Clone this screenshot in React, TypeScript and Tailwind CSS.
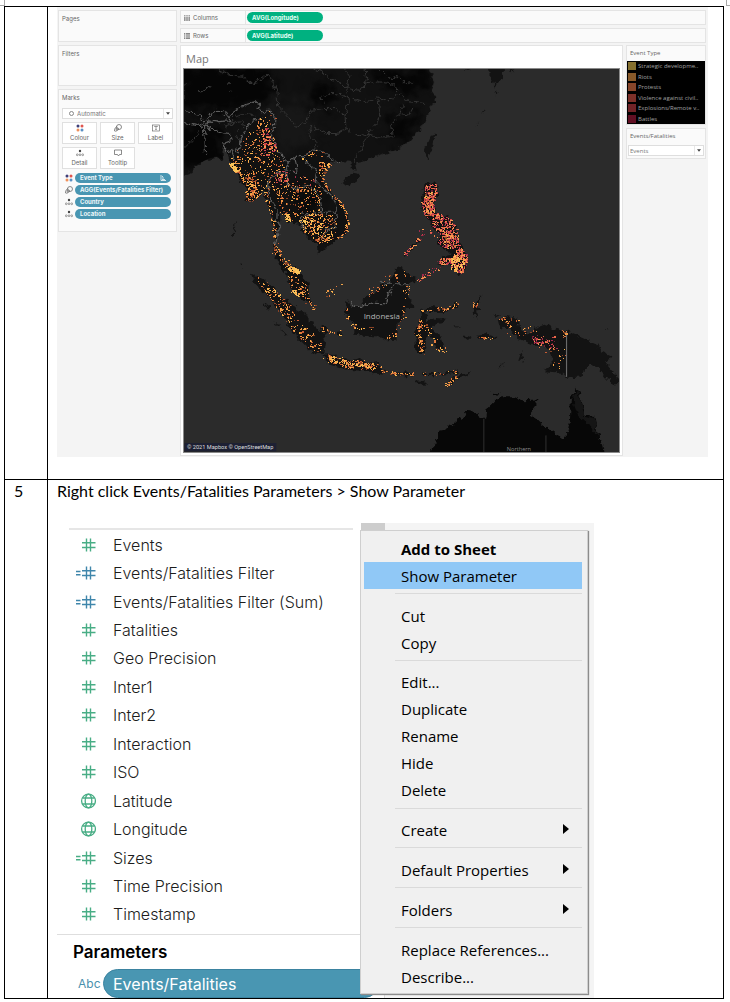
import type { ReactNode } from "react";

type Point = [number, number];

const parse = (s: string): Point[] =>
  s.split(" ").map((p) => p.split(",").map(Number) as Point);

const WARM = ["#f6b450", "#ee9644", "#e07a3c", "#c65c34", "#f2a64a", "#8a4426"];
const GOLD = ["#fbc75c", "#f8b954", "#f3a04a"];
const RED = ["#d0434a", "#e86a48", "#f59a52", "#a32b4c", "#ea7a4a", "#d04a4e", "#6e2436"];

type Cluster = { kind: "area" | "trail"; path: string; n: number; colors: string[]; spread?: number };

const CLUSTERS: Cluster[] = [
  { kind: "area", n: 300, colors: WARM, path: "165,455 200,400 240,350 265,330 285,350 275,390 285,430 300,470 322,490 300,540 265,545 265,600 272,630 250,575 230,600 195,603 200,560 175,530" },
  { kind: "area", n: 120, colors: WARM, path: "195,520 222,515 226,560 238,590 215,604 195,602" },
  { kind: "area", n: 75, colors: RED, path: "240,430 262,405 290,430 285,450 262,470 240,462" },
  { kind: "area", n: 30, colors: RED, path: "240,390 262,380 268,420 245,420" },
  { kind: "trail", n: 90, colors: GOLD, spread: 7, path: "152,490 166,512" },
  { kind: "trail", n: 40, colors: WARM, spread: 8, path: "158,478 190,545" },
  { kind: "area", n: 40, colors: RED, path: "285,510 320,508 322,545 275,560" },
  { kind: "area", n: 150, colors: WARM, path: "265,545 310,530 360,560 410,570 425,640 365,640 330,665 300,640 290,600" },
  { kind: "trail", n: 30, colors: GOLD, spread: 9, path: "318,645 325,662" },
  { kind: "trail", n: 60, colors: WARM, spread: 8, path: "250,570 268,620 280,680 285,730 282,765" },
  { kind: "trail", n: 45, colors: WARM, spread: 10, path: "282,740 310,780 325,800" },
  { kind: "trail", n: 150, colors: GOLD, spread: 9, path: "328,804 342,810 355,816" },
  { kind: "area", n: 60, colors: WARM, path: "320,820 350,830 385,860 385,900 350,885 330,860" },
  { kind: "trail", n: 24, colors: GOLD, spread: 6, path: "335,870 352,888" },
  { kind: "trail", n: 20, colors: WARM, spread: 12, path: "385,900 400,925" },
  { kind: "area", n: 200, colors: WARM, path: "362,645 400,638 465,645 470,685 450,725 420,730 395,715 370,695" },
  { kind: "trail", n: 60, colors: GOLD, spread: 14, path: "365,670 385,650 410,705 415,660" },
  { kind: "area", n: 60, colors: WARM, path: "415,480 460,490 435,520 425,550 415,520" },
  { kind: "trail", n: 85, colors: WARM, spread: 8, path: "430,550 460,585 490,620 503,660 498,692 470,715" },
  { kind: "trail", n: 40, colors: WARM, spread: 22, path: "340,570 400,560 415,600" },
  { kind: "trail", n: 14, colors: RED, spread: 20, path: "350,510 390,560" },
  { kind: "trail", n: 18, colors: WARM, spread: 18, path: "365,470 420,455" },
  { kind: "area", n: 170, colors: WARM, path: "212,822 250,838 275,860 300,890 330,910 350,960 390,990 428,1030 430,1055 405,1060 350,1010 325,980 285,920" },
  { kind: "trail", n: 24, colors: GOLD, spread: 7, path: "260,865 285,870 300,895" },
  { kind: "trail", n: 24, colors: WARM, spread: 12, path: "420,980 445,1000 480,1002" },
  { kind: "trail", n: 190, colors: WARM, spread: 14, path: "440,1074 470,1082 510,1095 540,1092 560,1100 595,1098" },
  { kind: "trail", n: 50, colors: GOLD, spread: 12, path: "445,1075 460,1078 530,1095 580,1100" },
  { kind: "trail", n: 45, colors: WARM, spread: 7, path: "600,1110 650,1122 700,1122" },
  { kind: "trail", n: 20, colors: WARM, spread: 7, path: "725,1122 780,1122 835,1113" },
  { kind: "trail", n: 24, colors: WARM, spread: 8, path: "798,1155 815,1145 835,1130" },
  { kind: "trail", n: 26, colors: WARM, spread: 8, path: "500,905 500,950 525,985 580,985" },
  { kind: "trail", n: 30, colors: WARM, spread: 16, path: "550,895 605,855 650,820 690,830" },
  { kind: "trail", n: 36, colors: WARM, spread: 10, path: "690,850 675,880 670,940 650,1000 625,1015" },
  { kind: "trail", n: 80, colors: WARM, spread: 11, path: "722,960 712,1000 725,1030 722,1060" },
  { kind: "trail", n: 34, colors: WARM, spread: 7, path: "725,930 780,928 815,925 832,908" },
  { kind: "trail", n: 34, colors: WARM, spread: 14, path: "725,965 745,985 775,1050 800,1050" },
  { kind: "area", n: 210, colors: RED, path: "732,560 748,550 768,552 772,580 760,610 765,635 745,655 730,640 724,605 738,590" },
  { kind: "area", n: 110, colors: WARM, path: "735,580 770,570 758,620 762,650 745,650 730,610" },
  { kind: "area", n: 340, colors: RED, path: "745,640 780,640 815,655 835,690 840,740 800,750 775,730 780,700 755,675" },
  { kind: "area", n: 90, colors: WARM, path: "790,690 835,710 830,745 795,745" },
  { kind: "area", n: 320, colors: RED, path: "770,785 790,770 815,775 838,735 858,755 864,785 845,820 825,815 810,790 785,795" },
  { kind: "area", n: 90, colors: GOLD, path: "808,780 830,760 855,780 850,800 830,818 812,805" },
  { kind: "trail", n: 34, colors: RED, spread: 6, path: "672,765 692,745 718,715" },
  { kind: "trail", n: 40, colors: RED, spread: 8, path: "715,842 745,818 775,805" },
  { kind: "trail", n: 14, colors: RED, spread: 18, path: "715,690 760,700" },
  { kind: "trail", n: 26, colors: WARM, spread: 14, path: "960,962 985,960 985,980 1015,960" },
  { kind: "trail", n: 18, colors: WARM, spread: 14, path: "980,1005 1030,1000 1065,980" },
  { kind: "trail", n: 65, colors: RED, spread: 20, path: "1060,1020 1085,1025 1125,1030" },
  { kind: "trail", n: 20, colors: WARM, spread: 20, path: "1100,1050 1150,1045 1145,1080 1120,1110" },
  { kind: "trail", n: 18, colors: WARM, spread: 6, path: "1150,995 1160,1000 1155,1010" },
  { kind: "trail", n: 12, colors: WARM, spread: 10, path: "880,925 895,905" },
  { kind: "trail", n: 10, colors: WARM, spread: 8, path: "897,1015 945,1010" },
  { kind: "trail", n: 12, colors: WARM, spread: 16, path: "430,880 485,865" },
];

const inside = ([x, y]: Point, poly: Point[]) => {
  let hit = false;
  for (let i = 0, j = poly.length - 1; i < poly.length; j = i++) {
    const [xi, yi] = poly[i];
    const [xj, yj] = poly[j];
    if (yi > y !== yj > y && x < ((xj - xi) * (y - yi)) / (yj - yi) + xi) hit = !hit;
  }
  return hit;
};

const makeDots = () => {
  let seed = 20211;
  const rnd = () => {
    seed = (seed * 1664525 + 1013904223) % 4294967296;
    return seed / 4294967296;
  };
  const byColor: Record<string, string> = {};
  for (const c of CLUSTERS) {
    const pts = parse(c.path);
    const xs = pts.map((p) => p[0]);
    const ys = pts.map((p) => p[1]);
    const x0 = Math.min(...xs);
    const y0 = Math.min(...ys);
    const w = Math.max(...xs) - x0;
    const h = Math.max(...ys) - y0;
    let made = 0;
    let tries = 0;
    while (made < c.n && tries++ < 8000) {
      let p: Point;
      if (c.kind === "area") {
        p = [x0 + rnd() * w, y0 + rnd() * h];
        if (!inside(p, pts)) continue;
      } else {
        const i = Math.floor(rnd() * (pts.length - 1));
        const t = rnd();
        const s = c.spread ?? 6;
        p = [
          pts[i][0] + (pts[i + 1][0] - pts[i][0]) * t + (rnd() + rnd() - 1) * s,
          pts[i][1] + (pts[i + 1][1] - pts[i][1]) * t + (rnd() + rnd() - 1) * s,
        ];
      }
      made++;
      const color = c.colors[Math.floor(rnd() * c.colors.length)];
      const width = rnd() > 0.75 ? 6 : 3;
      byColor[color] = (byColor[color] ?? "") + `M${p[0].toFixed(1)} ${p[1].toFixed(1)}h${width}v3.500h-${width}z`;
    }
  }
  return Object.entries(byColor);
};

const DOTS = makeDots();

const MAINLAND =
  "M0 200L745 200 765 245 755 270 770 290 750 330 730 375 690 420 650 450 600 465 550 485 525 490 530 512 515 505 515 485 480 483 455 487 440 500 425 525 430 550 450 575 480 610 500 640 505 670 500 695 480 715 455 735 430 745 413 765 410 735 385 715 370 700 365 675 340 672 320 660 310 640 300 635 300 660 290 700 285 735 300 770 320 800 345 800 355 820 385 850 385 880 390 912 375 905 345 880 325 845 315 815 290 785 278 760 285 720 280 690 275 650 262 610 250 570 235 590 215 607 195 600 200 570 185 545 170 520 150 490 140 455 125 440 128 480 110 470 85 475 55 490 40 500 35 515 0 528Z";

const ISLANDS = [
  "M212 822L250 838 275 860 300 890 330 910 350 930 385 945 385 965 400 970 410 985 430 1000 435 1030 430 1060 405 1062 380 1045 350 1015 325 980 310 950 285 920 270 890 240 870 220 845Z",
  "M430 1065L455 1065 480 1080 510 1085 540 1078 555 1090 595 1085 600 1105 625 1115 610 1122 560 1115 500 1110 450 1095 435 1080Z",
  "M500 900L510 920 530 925 545 915 555 890 590 880 605 850 630 845 655 800 670 805 675 820 710 835 700 850 680 855 685 890 704 925 675 925 670 955 650 975 650 1020 620 1022 600 1010 570 1010 520 1005 520 970 500 950 497 920Z",
  "M720 965L725 930 750 922 800 930 835 905 835 922 800 936 740 937 738 968 770 955 800 957 792 970 762 975 755 985 770 1000 788 1020 795 1050 770 1052 760 1020 742 995 735 1060 710 1060 705 1000Z",
  "M882 925L900 890 905 893 893 920 908 930 890 932 893 958 884 948Z",
  "M895 1008L920 1003 950 1013 948 1020 915 1012 895 1018ZM852 1010L865 1007 876 1014 868 1021 853 1018Z",
  "M955 960L980 952 1015 958 1020 990 1040 1000 1055 1002 1070 985 1095 975 1135 990 1160 995 1210 1015 1255 1035 1265 1055 1300 1070 1290 1085 1275 1085 1300 1115 1330 1150 1310 1155 1290 1145 1260 1110 1235 1095 1215 1105 1210 1130 1165 1135 1150 1120 1095 1115 1115 1098 1120 1075 1110 1050 1090 1040 1050 1030 1015 1015 990 990 960 980Z",
  "M640 1120L700 1118 700 1127 645 1127ZM722 1119L765 1121 763 1127 724 1126ZM770 1122L835 1113 835 1119 775 1127ZM705 1143L725 1144 745 1155 735 1159 712 1150ZM800 1158L815 1140 845 1125 875 1120 865 1128 830 1138 808 1158Z",
  "M490 545L505 527 520 518 538 522 530 545 505 558ZM735 445L750 410 767 403 762 430 743 475 732 455Z",
  "M924 200L974 200 970 235 945 262 938 235ZM982 200L1005 200 993 222ZM856 200L870 206 858 212ZM943 280L955 275 948 285ZM885 380L900 362 892 368ZM905 345L920 330 916 328Z",
  "M735 553L770 550 772 585 762 615 770 640 812 655 828 685 842 735 862 770 860 800 842 825 822 812 808 790 770 795 790 770 815 765 800 745 770 735 780 705 755 675 732 645 724 605Z",
  "M670 765L692 743 720 713 722 718 695 748 674 768Z",
  "M252 910L268 922 266 930 255 920ZM282 962L298 978 294 982ZM300 985L320 1005 316 1008ZM156 710L164 660 166 664 159 712ZM180 790L185 797 182 801ZM420 980L440 980 445 1000 428 998ZM470 1000L485 998 483 1008 472 1007Z",
  "M1020 1080L1028 1057 1032 1065 1025 1085ZM955 1108L970 1092 968 1100 960 1110ZM820 980L845 981 835 984ZM930 980L942 981ZM942 946L962 947 950 952ZM1278 985L1292 987 1280 988Z",
];

const AUSTRALIA =
  "M745 1365L775 1320 775 1295 800 1290 835 1260 870 1235 892 1240 898 1255 920 1255 925 1225 950 1200 970 1190 1000 1190 1030 1202 1075 1200 1070 1220 1050 1245 1080 1265 1110 1290 1150 1317 1163 1305 1172 1270 1175 1200 1190 1168 1205 1195 1218 1245 1245 1250 1255 1300 1270 1340 1275 1365ZM938 1180L960 1181 955 1188 940 1187Z";

const PROVINCES =
  "M110 206L150 225 190 228 215 247 240 240 260 225 275 240 290 270 292 318 320 345 350 382 375 365 395 330 430 325 465 325 495 345 505 300 500 265 480 245 450 240 430 215 400 206M430 310L425 290 450 280 470 280 500 290 545 305 580 300 590 290 620 300 640 295 655 280 690 305 735 310M490 206L510 225 500 265 540 270 560 250 600 245 640 252 655 270M495 345L498 385 470 400 435 400 395 378 385 405 410 430 405 450M498 385L535 410 565 402 590 370 600 340 595 300M565 402L590 410 640 410 635 370 660 340 670 310M545 270L560 235 555 206M600 206L630 235 655 225 680 250 700 245M520 485L540 455 565 402M660 340L690 345 700 320M10 300L10 250M183 440L165 400 195 375 180 365 130 375M60 392L25 430 10 445M135 380L160 350 200 340 225 345";

const BORDERS =
  "M10 330L40 340 62 345 66 365 80 355 90 335 120 333 148 350 145 362 110 365 85 362 76 375 66 370M148 350L165 330 190 315 225 305 238 310 230 325 250 342 260 330 272 330 284 350 282 385 272 400 285 425 290 450 310 470 320 490 350 465 370 468 400 450 425 452 455 480 475 485M10 368L50 372 72 380 75 470M72 380L130 398 150 400 155 420 130 430 140 460 150 445 165 480M205 372L180 420 170 460M205 372L240 352M320 490L325 510 345 520 350 500 345 480 350 465M325 510L285 525 262 550 265 590 290 625 290 660 300 680 290 710 285 735M318 515L325 555 350 565 385 555 420 590 425 640 370 645 360 660 375 690M370 468L385 490 410 515 405 540 440 575 465 600 468 640 425 640M468 640L465 680 440 690 425 720";

const EVENT_TYPES: [string, string][] = [
  ["Strategic developme..", "bg-[#85702f]"],
  ["Riots", "bg-[#88592a]"],
  ["Protests", "bg-[#87452a]"],
  ["Violence against civil..", "bg-[#7c3029]"],
  ["Explosions/Remote v..", "bg-[#712327]"],
  ["Battles", "bg-[#610f23]"],
];

function MapView() {
  return (
    <svg viewBox="10 206 1310 1152" preserveAspectRatio="none" className="block h-[385px] w-full border border-[#8a8a8a] bg-[#2b2b2b]" role="img" aria-label="Event map of South East Asia">
      <defs>
        <filter id="coast" x="-5%" y="-5%" width="110%" height="110%" colorInterpolationFilters="sRGB">
          <feTurbulence type="fractalNoise" baseFrequency="0.07" numOctaves="2" seed="4" result="n" />
          <feDisplacementMap in="SourceGraphic" in2="n" scale="22" xChannelSelector="R" yChannelSelector="G" />
        </filter>
        <filter id="soft" x="-30%" y="-30%" width="160%" height="160%" colorInterpolationFilters="sRGB">
          <feGaussianBlur stdDeviation="14" result="b" />
          <feTurbulence type="fractalNoise" baseFrequency="0.03" numOctaves="2" seed="9" result="n" />
          <feDisplacementMap in="b" in2="n" scale="70" xChannelSelector="R" yChannelSelector="G" />
        </filter>
        <clipPath id="land">
          <path d={MAINLAND} />
        </clipPath>
      </defs>
      <g filter="url(#coast)">
        <path d={MAINLAND} fill="#111111" />
        {ISLANDS.map((d) => (
          <path key={d} d={d} fill="#131313" />
        ))}
        <path d={AUSTRALIA} fill="#070707" />
        <path d="M1180 1200l10-25 14 20 12 55 28 5 12 60 -30-40 -30-30z" fill="#151515" />
      </g>
      <g clipPath="url(#land)">
        <g filter="url(#soft)">
          <path d="M0 380h125v120H0zM385 260l50-20 40 30 -20 60 -50-10zM560 206h190v60l-90 15 -60-25zM640 350l60-20 20 40 -60 60 -50-30zM0 200h270l20 80 -120 50H0z" fill="#050505" />
          <path d="M250 310l120-10 40 110 -90 50 -50-60z" fill="#171717" />
          <path d="M360 570l60 10 0 50 -60 0z" fill="#070707" />
        </g>
      </g>
      <g filter="url(#coast)" fill="none" strokeLinejoin="round">
        <path d={PROVINCES} stroke="#343434" strokeWidth="3" />
        <path d={BORDERS} stroke="#5e5e5e" strokeWidth="3.500" />
        <path d="M510 900L520 920 545 920 570 910 615 912 628 880 640 852 690 852M600 845L615 858 630 842" stroke="#626262" strokeWidth="3.500" />
        <path d="M55 275l20-5M80 265l10-5M140 248l10 0M195 243l15 3M145 275l8-2" stroke="#3a3a3a" strokeWidth="5" />
      </g>
      <path d="M1162 995V1132" stroke="#6a6a6a" strokeWidth="3.500" />
      <path d="M913 1258V1358M1100 1308V1358" stroke="#303030" strokeWidth="3" />
      <g shapeRendering="crispEdges">
        {DOTS.map(([color, d]) => (
          <path key={color} d={d} fill={color} />
        ))}
      </g>
      <text x="551" y="959" fontSize="24" fill="#b4b4b4" fontFamily="'Open Sans', sans-serif">Indonesia</text>
      <text x="982" y="1356" fontSize="17" fill="#8c8c8c" fontFamily="'Open Sans', sans-serif">Northern</text>
      <rect x="12" y="1331" width="276" height="25" fill="#1d2033" />
      <text x="19" y="1350" fontSize="17" fill="#dcdcdc" fontFamily="Roboto, sans-serif">© 2021 Mapbox © OpenStreetMap</text>
    </svg>
  );
}

const ColourIcon = () => (
  <svg viewBox="0 0 16 16" className="size-[8px] shrink-0">
    <circle cx="4" cy="4" r="3" fill="#3f3f78" />
    <circle cx="12" cy="4" r="3" fill="#e0564f" />
    <circle cx="4" cy="12" r="3" fill="#f0905a" />
    <circle cx="12" cy="12" r="3" fill="#5a8fc4" />
  </svg>
);
const SizeIcon = () => (
  <svg viewBox="0 0 16 16" className="size-[8px] shrink-0" fill="none" stroke="#666" strokeWidth="1.500">
    <circle cx="10" cy="6" r="5" />
    <path d="M5.500 4.500C2 8 .5 11 1.200 14c2 1 4.500.5 6-3" />
    <circle cx="6.500" cy="10" r="2.500" />
  </svg>
);
const LabelIcon = () => (
  <svg viewBox="0 0 16 16" className="size-[8px] shrink-0" fill="none" stroke="#666" strokeWidth="1.300">
    <rect x="1" y="2" width="14" height="12" />
    <path d="M5 6V5h6v1M8 5v6M6.500 11h3" />
  </svg>
);
const DetailIcon = () => (
  <svg viewBox="0 0 16 16" className="size-[8px] shrink-0" fill="none" stroke="#777" strokeWidth="1.400">
    <circle cx="8" cy="4" r="2.400" fill="#444" stroke="none" />
    <circle cx="2.500" cy="11.500" r="1.800" />
    <circle cx="8" cy="11.500" r="1.800" />
    <circle cx="13.500" cy="11.500" r="1.800" />
  </svg>
);
const TooltipIcon = () => (
  <svg viewBox="0 0 16 16" className="size-[8px] shrink-0" fill="none" stroke="#666" strokeWidth="1.500">
    <path d="M1 2h14v9h-4l-2 3-2-3H1z" />
  </svg>
);
const Caret = () => (
  <svg viewBox="0 0 6 4" className="h-[3px] w-[4px] fill-[#444]">
    <path d="M0 0h6L3 4z" />
  </svg>
);

const card = "border border-[#e4e4e4] bg-[#fafafa]";

function Dropdown({ label, value, className, indent }: { label: string; value: string; className: string; indent?: boolean }) {
  return (
    <div className={`relative border border-[#dedede] bg-white ${className}`}>
      <select aria-label={label} className={`block h-full w-full appearance-none bg-transparent pr-3 text-[#777] outline-none ${indent ? "pl-[14px]" : "pl-[1px]"}`}>
        <option>{value}</option>
      </select>
      {indent && <span className="absolute top-[2px] left-[6px] size-[5px] rounded-full border border-[#888]" />}
      <span className="pointer-events-none absolute inset-y-0 right-0 flex w-[9px] items-center justify-center border-l border-[#e8e8e8]">
        <Caret />
      </span>
    </div>
  );
}

function MarkPill({ icon, children, sorted }: { icon: ReactNode; children: ReactNode; sorted?: boolean }) {
  return (
    <li className="flex items-center gap-[2px] pr-[2px] pl-[3px]">
      {icon}
      <span className="flex h-[10px] flex-1 items-center justify-between rounded-full bg-[#4996b2] px-[5px] font-bold whitespace-nowrap text-[#eef6f9]">
        {children}
        {sorted && (
          <svg viewBox="0 0 12 12" className="size-[6px]" stroke="#fff" strokeWidth="1.500">
            <path d="M2 0v11h10M4 3h2M4 6h4M4 9h6" fill="none" />
          </svg>
        )}
      </span>
    </li>
  );
}

function Shelf({ name, pill, columns }: { name: string; pill: string; columns?: boolean }) {
  return (
    <div className={`flex h-[15px] ${card}`}>
      <div className="flex w-[65px] items-center gap-[3px] border-r border-[#e4e4e4] pl-[3px]">
        <svg viewBox="0 0 14 14" className="size-[6px]" stroke="#666" strokeWidth="2.500">
          <path d={columns ? "M2 4v10M7 4v10M12 4v10M1 1.500h2M6 1.500h2M11 1.500h2" : "M4 2h10M4 7h10M4 12h10M0 2h2.500M0 7h2.500M0 12h2.500"} fill="none" />
        </svg>
        {name}
      </div>
      <div className="p-[1px]">
        <div className="flex h-[11px] w-[76px] items-center rounded-full bg-[#00b180] pl-[5px] font-bold text-[#e6fff6]">{pill}</div>
      </div>
    </div>
  );
}

function Workbook() {
  const buttons: [string, ReactNode][] = [
    ["Colour", <ColourIcon />],
    ["Size", <SizeIcon />],
    ["Label", <LabelIcon />],
    ["Detail", <DetailIcon />],
    ["Tooltip", <TooltipIcon />],
  ];
  return (
    <div className="flex h-[450px] gap-[3px] bg-[#f4f4f4] pt-[3px] pr-[2px] pl-[1px] font-[Inter,sans-serif] text-[6px] leading-[8px] text-[#666]">
      <div className="flex w-[119px] flex-col gap-[3px]">
        <section className={`h-[32px] px-[3px] pt-[4px] ${card}`}>Pages</section>
        <section className={`h-[41px] px-[3px] pt-[4px] ${card}`}>Filters</section>
        <section className={`h-[143px] px-[3px] pt-[4px] ${card}`}>
          <h3>Marks</h3>
          <Dropdown label="Mark type" value="Automatic" className="mt-[6px] h-[11px]" indent />
          <div className="mt-[3px] grid grid-cols-3 gap-[3px]">
            {buttons.map(([name, icon]) => (
              <button key={name} type="button" className="flex h-[22px] flex-col items-center justify-center gap-[2px] border border-[#e0e0e0] bg-white">
                {icon}
                <span>{name}</span>
              </button>
            ))}
          </div>
          <ul className="mt-[4px] flex flex-col gap-[2px]">
            <MarkPill icon={<ColourIcon />} sorted>Event Type</MarkPill>
            <MarkPill icon={<SizeIcon />}>AGG(Events/Fatalities Filter)</MarkPill>
            <MarkPill icon={<DetailIcon />}>Country</MarkPill>
            <MarkPill icon={<DetailIcon />}>Location</MarkPill>
          </ul>
        </section>
      </div>
      <div className="flex min-w-0 flex-1 flex-col gap-[2px]">
        <div className="flex flex-col gap-[3px]">
          <Shelf name="Columns" pill="AVG(Longitude)" columns />
          <Shelf name="Rows" pill="AVG(Latitude)" />
        </div>
        <div className="flex items-start gap-[3px]">
          <section className="min-w-0 flex-1 border border-[#e4e4e4] bg-white px-[2px] pb-[2px]">
            <h2 className="h-[22px] pt-[5px] pl-[3px] font-['Open_Sans',sans-serif] text-[11px] leading-[16px] text-[#777]">Map</h2>
            <MapView />
          </section>
          <aside className="flex w-[80px] flex-col gap-[3px] font-['Open_Sans',sans-serif]">
            <section className={card}>
              <h3 className="h-[15px] pt-[3px] pl-[3px]">Event Type</h3>
              <ul className="flex h-[63px] flex-col bg-black text-[#a0a0a0]">
                {EVENT_TYPES.map(([name, tone]) => (
                  <li key={name} className="flex flex-1 items-center gap-[2px] pl-[1px] whitespace-nowrap">
                    <span className={`size-[8px] shrink-0 ${tone}`} />
                    {name}
                  </li>
                ))}
              </ul>
            </section>
            <section className={`px-[1px] pb-[2px] ${card}`}>
              <h3 className="h-[16px] pt-[3px] pl-[2px]">Events/Fatalities</h3>
              <Dropdown label="Events/Fatalities" value="Events" className="h-[11px]" />
            </section>
          </aside>
        </div>
      </div>
    </div>
  );
}

function HashIcon({ calc, blue }: { calc?: boolean; blue?: boolean }) {
  return (
    <svg viewBox="0 0 20 16" className="h-[16px] w-[20px]" fill="none" stroke={blue ? "#3f86ab" : "#48ad85"} strokeWidth="1.400">
      <path d="M10.500 1.500v13M14.500 1.500v13M6 5.700h13.500M6 10.500h13.500" />
      {calc && <path d="M0 6.500h4.500M0 9.800h4.500" />}
    </svg>
  );
}

function GlobeIcon() {
  return (
    <svg viewBox="0 0 20 16" className="h-[16px] w-[20px]" fill="none" stroke="#48ad85" strokeWidth="1.300">
      <circle cx="12.500" cy="8" r="6.900" />
      <ellipse cx="12.500" cy="8" rx="3.300" ry="6.900" />
      <path d="M6.500 5h12M6.500 11h12" />
    </svg>
  );
}

type Field = { name: string; icon: "num" | "calc" | "calcBlue" | "geo" };
const FIELDS: Field[] = [
  { name: "Events", icon: "num" },
  { name: "Events/Fatalities Filter", icon: "calcBlue" },
  { name: "Events/Fatalities Filter (Sum)", icon: "calcBlue" },
  { name: "Fatalities", icon: "num" },
  { name: "Geo Precision", icon: "num" },
  { name: "Inter1", icon: "num" },
  { name: "Inter2", icon: "num" },
  { name: "Interaction", icon: "num" },
  { name: "ISO", icon: "num" },
  { name: "Latitude", icon: "geo" },
  { name: "Longitude", icon: "geo" },
  { name: "Sizes", icon: "calc" },
  { name: "Time Precision", icon: "num" },
  { name: "Timestamp", icon: "num" },
];

const MENU: string[][] = [
  ["Add to Sheet", "Show Parameter"],
  ["Cut", "Copy"],
  ["Edit...", "Duplicate", "Rename", "Hide", "Delete"],
  ["Create"],
  ["Default Properties"],
  ["Folders"],
  ["Replace References...", "Describe..."],
];
const SUBMENUS = ["Create", "Default Properties", "Folders"];

function ContextMenu() {
  return (
    <div role="menu" className="absolute top-[7px] left-[303px] flex h-[464px] w-[228px] flex-col border border-[#cfcfcf] bg-[#f0f0f0] pt-[4px] pr-[5px] pb-[3px] pl-[3px] font-['Open_Sans',sans-serif] text-[15px] text-black shadow-[1px_1px_1px_#8c8c8c]">
      {MENU.map((group, g) => (
        <div key={group[0]} className="contents">
          {g > 0 && (
            <div className="flex-1 pt-[4px] pl-[31px]">
              <div className="h-px bg-[#dadada]" />
            </div>
          )}
          {group.map((item) => (
            <button
              key={item}
              type="button"
              role="menuitem"
              className={`flex h-[27px] shrink-0 items-center justify-between pt-[1px] pr-[13px] pl-[37px] text-left ${item === "Add to Sheet" ? "font-bold" : ""} ${item === "Show Parameter" ? "bg-[#90c8f6]" : ""}`}
            >
              {item}
              {SUBMENUS.includes(item) && (
                <svg viewBox="0 0 6 10" className="mb-[3px] h-[10px] w-[6px]">
                  <path d="M0 0l6 5-6 5z" />
                </svg>
              )}
            </button>
          ))}
        </div>
      ))}
    </div>
  );
}

function DataPane() {
  return (
    <div className="relative flex h-[475px] w-[537px] max-w-full overflow-hidden font-[Inter,sans-serif]">
      <div className="flex w-[328px] flex-col border-r border-[#dcdcdc]">
        <div className="mr-[31px] ml-[12px] h-[7px] border-b-2 border-[#e6e6e6]" />
        <ul className="flex h-[400px] flex-col text-[16px] font-light text-[#1c1c1c]">
          {FIELDS.map(({ name, icon }) => (
            <li key={name} className="flex flex-1 items-center gap-[17px] pt-[1px] pl-[19px]">
              {icon === "geo" ? <GlobeIcon /> : <HashIcon calc={icon !== "num"} blue={icon === "calcBlue"} />}
              {name}
            </li>
          ))}
        </ul>
        <h3 className="mt-[6px] h-[35px] border-t border-[#dedede] pl-[16px] text-[17px] leading-[34px] font-semibold text-black">Parameters</h3>
        <div className="flex h-[29px] shrink-0 items-center gap-[4px] pl-[21px]">
          <span className="w-[21px] text-[12px] text-[#4a90ad]">Abc</span>
          <span className="mr-[5px] flex h-[29px] flex-1 items-center rounded-full border border-[#3b83a0] bg-[#4996b2] pl-[9px] text-[16px] text-white">Events/Fatalities</span>
        </div>
      </div>
      <div className="flex-1 bg-[#f4f4f4]" />
      <div className="absolute top-0 left-[304px] h-[8px] w-[24px] bg-[#cdcdcd]" />
      <ContextMenu />
    </div>
  );
}

export default function App() {
  return (
    <main className="min-h-screen bg-white font-[Lato,sans-serif] text-black">
      <div className="flex h-[6px] justify-between">
        <div className="w-[5px] border-r border-b border-[#a8a8a8]" />
        <div className="w-[4px] border-b border-l border-[#a8a8a8]" />
      </div>
      <div className="pr-[6px] pl-[4px]">
        <table className="w-full table-fixed border-separate border-spacing-0 border-t border-l border-black">
          <colgroup>
            <col className="w-[43px]" />
            <col />
          </colgroup>
          <tbody>
            <tr className="align-top">
              <td className="border-r border-b border-black p-0" />
              <td className="border-r border-b border-black p-0 pr-[15px] pb-[22px] pl-[9px]">
                <Workbook />
              </td>
            </tr>
            <tr className="align-top">
              <td className="border-r border-b border-black p-0 pt-[1px] pl-[9px] text-[16px] leading-[20px]">5</td>
              <td className="border-r border-b border-black p-0 pt-[1px] pl-[9px]">
                <p className="mb-[22px] text-[16px] leading-[20px] [font-variant-ligatures:none]">Right click Events/Fatalities Parameters &gt; Show Parameter</p>
                <DataPane />
              </td>
            </tr>
          </tbody>
        </table>
      </div>
    </main>
  );
}
